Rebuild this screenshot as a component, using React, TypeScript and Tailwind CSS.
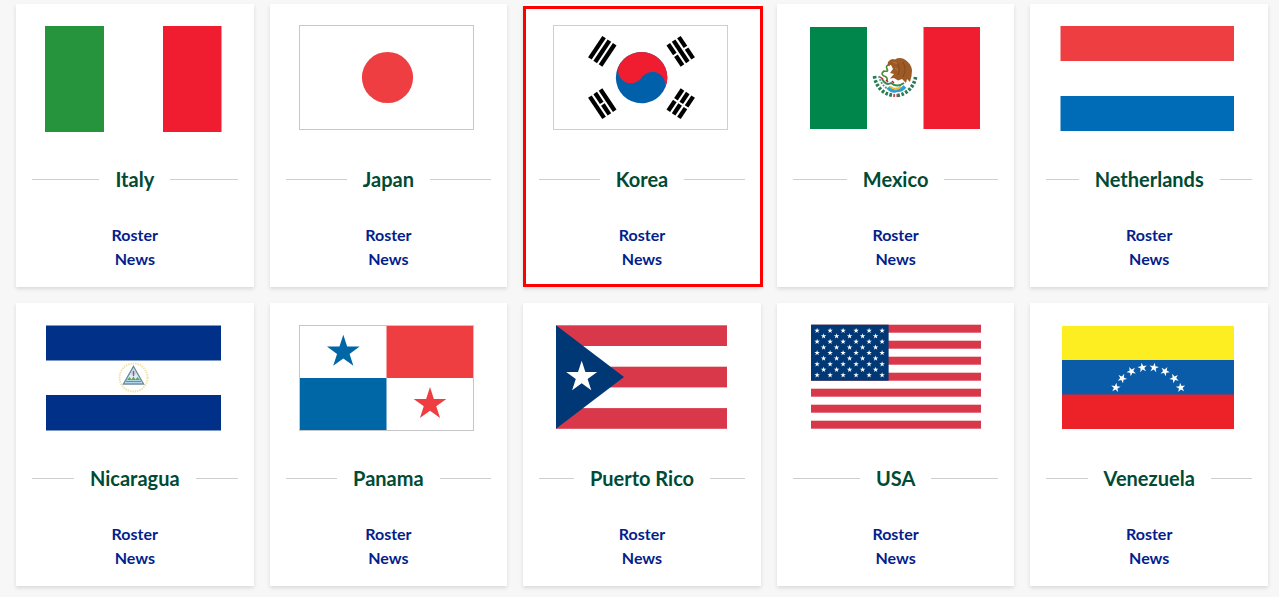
import type { ReactNode } from "react";

const starPoints = (cx: number, cy: number, r: number) =>
  Array.from({ length: 10 }, (_, i) => {
    const radius = i % 2 === 0 ? r : r * 0.382;
    const a = (Math.PI / 5) * i - Math.PI / 2;
    return `${(cx + radius * Math.cos(a)).toFixed(2)},${(cy + radius * Math.sin(a)).toFixed(2)}`;
  }).join(" ");

function Star({ cx, cy, r, fill, turn = 0 }: { cx: number; cy: number; r: number; fill: string; turn?: number }) {
  return <polygon points={starPoints(cx, cy, r)} fill={fill} transform={`rotate(${turn} ${cx} ${cy})`} />;
}

function Trigram({ x, y, turn, broken }: { x: number; y: number; turn: number; broken: boolean[] }) {
  return (
    <g transform={`translate(${x} ${y}) rotate(${turn})`} fill="#000">
      {broken.map((split, i) => {
        const left = (i - 1) * 6.4 - 2.15;
        return split ? (
          <g key={i}>
            <rect x={left} y={-12.8} width={4.3} height={11.8} />
            <rect x={left} y={1} width={4.3} height={11.8} />
          </g>
        ) : (
          <rect key={i} x={left} y={-12.8} width={4.3} height={25.6} />
        );
      })}
    </g>
  );
}

const italy = (
  <>
    <rect x="13" y="6" width="59" height="106" fill="#26933d" />
    <rect x="131" y="6" width="58.5" height="106" fill="#f01d30" />
  </>
);

const japan = (
  <>
    <rect x="14.5" y="5.5" width="174" height="104" fill="#fff" stroke="#c8c8c8" />
    <circle cx="102.5" cy="57.5" r="25.6" fill="#ef3e42" />
  </>
);

const korea = (
  <>
    <rect x="14.5" y="5.5" width="174" height="104" fill="#fff" stroke="#cfcfcf" />
    <g transform="translate(102.6 57.6) rotate(33.7)">
      <circle r="25.7" fill="#0060aa" />
      <path d="M-25.7 0A25.7 25.7 0 0 1 25.7 0A12.85 12.85 0 0 0 0 0A12.85 12.85 0 0 1 -25.7 0Z" fill="#f01d30" />
    </g>
    <Trigram x={63.3} y={31.3} turn={33.7} broken={[false, false, false]} />
    <Trigram x={141.7} y={31.3} turn={-33.7} broken={[true, false, true]} />
    <Trigram x={63.3} y={83.7} turn={-33.7} broken={[false, true, false]} />
    <Trigram x={141.7} y={83.7} turn={33.7} broken={[true, true, true]} />
  </>
);

const mexico = (
  <>
    <rect x="17" y="7" width="57" height="102" fill="#00854a" />
    <rect x="130.5" y="7" width="56.5" height="102" fill="#f01d30" />
    <g fill="none">
      <path d="M81.500 56C82.500 66 90 74.500 101 75.500" stroke="#2a7a55" strokeWidth="3.600" strokeDasharray="2.600 1.600" />
      <path d="M122.500 57C121.500 66 114 74.500 104 75.500" stroke="#2a7a55" strokeWidth="3.600" strokeDasharray="2.600 1.600" />
      <path d="M86 56C87 62 91 67 95 69" stroke="#5f9a7d" strokeWidth="1.800" strokeDasharray="2 1.200" />
      <path d="M95 67.500Q99 72 103 70.500Q108 71 112 66.500" stroke="#2f9fd0" strokeWidth="3.600" />
      <path d="M97 66.500Q103 71.500 108 66.500" stroke="#e8bd3a" strokeWidth="2.200" />
      <path d="M89 59Q93 66 98 63Q104 68 111 63" stroke="#3a8a55" strokeWidth="2" />
      <path d="M97 45Q92 45 94 49Q96 52 91 51Q87 54 91 56Q95 57 94 61" stroke="#4b8a35" strokeWidth="1.600" />
      <path d="M87 57L90 59M93 60L95 62M99 61L101 63" stroke="#b3272d" strokeWidth="1.500" />
    </g>
    <path
      d="M95 42Q98 38 102 39.500Q106 37 111 39Q118 43 119 50Q119 56 117 62L114 59L113 63L109 59L105 60.500L101 58L97 58.500L101 54L97 53L100 49L98 45L94.500 45Z"
      fill="#9c5a26"
    />
    <path d="M104 43Q108 49 105 55M110 42Q114 49 110 57" fill="none" stroke="#7f4519" strokeWidth="0.800" />
    <path d="M100 42L104 43.500M102 48L105 50" stroke="#bd7a41" strokeWidth="0.900" />
    <path d="M100.500 74h4.500v3h-4.500z" fill="#c2464b" />
    <path d="M102.100 74h1.300v3h-1.300z" fill="#fff" />
  </>
);

const netherlands = (
  <>
    <rect x="14.5" y="6" width="173.5" height="35" fill="#ef3e42" />
    <rect x="14.5" y="76" width="173.5" height="35" fill="#006cb7" />
  </>
);

const nicaragua = (
  <>
    <rect x="14" y="6.5" width="175" height="35" fill="#003087" />
    <rect x="14" y="76" width="175" height="35.500" fill="#003087" />
    <circle cx="101.5" cy="58.5" r="14" fill="none" stroke="#efe0a8" strokeWidth="2" strokeDasharray="1.400 1" />
    <path d="M101.500 47.500L111.500 65H91.500Z" fill="#dcecf2" stroke="#6d8a99" strokeWidth="1.400" />
    <path d="M98 55.500L101.500 49.500L105 55.500Z" fill="#b9d9ee" />
    <path d="M101.500 52v5" stroke="#d8453b" strokeWidth="1.400" />
    <path d="M95 61l2.500-3 2 2.500 2-3 2 3 2-2.500 2.500 3Z" fill="#5da659" />
    <path d="M94 62.500h15" stroke="#4c9bc7" strokeWidth="1.600" />
  </>
);

const panama = (
  <>
    <rect x="101.5" y="6.500" width="87" height="52.500" fill="#ef3e42" />
    <rect x="14.500" y="59" width="87" height="52.500" fill="#0067a6" />
    <rect x="14.500" y="6.500" width="174" height="105" fill="none" stroke="#c4c6c7" strokeWidth="1" />
    <Star cx={58.3} cy={32.9} r={17.2} fill="#0067a6" />
    <Star cx={145} cy={85.2} r={17.2} fill="#ef3e42" />
  </>
);

const puertoRico = (
  <>
    {[0, 2, 4].map((i) => (
      <rect key={i} x="17" y={6.3 + i * 20.7} width="171" height="20.7" fill="#d8384a" />
    ))}
    <path d="M17 6.300L85 58L17 109.800Z" fill="#003876" />
    <Star cx={42.7} cy={58} r={16.3} fill="#fff" />
  </>
);

const usa = (
  <>
    {[0, 2, 4, 6, 8, 10, 12].map((i) => (
      <rect key={i} x="18" y={5.7 + i * 8} width="170" height="8" fill="#d8384a" />
    ))}
    <rect x="18" y="5.700" width="77.600" height="56" fill="#003876" />
    {Array.from({ length: 9 }, (_, row) =>
      Array.from({ length: row % 2 === 0 ? 6 : 5 }, (_, col) => (
        <Star
          key={`${row}-${col}`}
          cx={24.1 + col * 13 + (row % 2) * 6.5}
          cy={11.6 + row * 5.58}
          r={2.9}
          fill="#fff"
        />
      )),
    )}
  </>
);

const venezuela = (
  <>
    <rect x="16" y="7" width="172" height="34" fill="#fdee21" />
    <rect x="16" y="41" width="172" height="36" fill="#0a5ba8" />
    <rect x="16" y="75.500" width="172" height="34.500" fill="#ed2228" />
    {[-64.4, -46.4, -27.8, -9.3, 9.3, 27.8, 46.4, 64.4].map((deg) => {
      const a = (deg * Math.PI) / 180;
      return <Star key={deg} cx={102.2 + 36 * Math.sin(a)} cy={84.2 - 36 * Math.cos(a)} r={5} fill="#fff" turn={deg} />;
    })}
  </>
);

type Team = { name: string; flag: ReactNode; selected?: boolean };

const teams: Team[] = [
  { name: "Italy", flag: italy },
  { name: "Japan", flag: japan },
  { name: "Korea", flag: korea, selected: true },
  { name: "Mexico", flag: mexico },
  { name: "Netherlands", flag: netherlands },
  { name: "Nicaragua", flag: nicaragua },
  { name: "Panama", flag: panama },
  { name: "Puerto Rico", flag: puertoRico },
  { name: "USA", flag: usa },
  { name: "Venezuela", flag: venezuela },
];

function TeamCard({ name, flag, selected }: Team) {
  return (
    <article className="relative bg-white p-4 shadow-[0_2px_4px_rgba(0,0,0,0.12)]">
      <div className="flex justify-center">
        <svg viewBox="0 0 206 120" className="h-[120px] w-[206px] shrink-0" aria-hidden="true">
          {flag}
        </svg>
      </div>
      <div className="mt-6 flex items-center gap-4">
        <span className="h-px flex-1 bg-[#cccfce]" />
        <h2 className="text-[20px] leading-[30px] font-bold text-[#004b35]">{name}</h2>
        <span className="h-px flex-1 bg-[#cccfce]" />
      </div>
      <nav aria-label={name} className="mt-[29px] flex flex-col items-center text-base leading-6 font-bold text-[#041e8c]">
        <a href="#roster">Roster</a>
        <a href="#news">News</a>
      </nav>
      {selected && (
        <span className="pointer-events-none absolute top-0.5 -right-0.5 bottom-0 left-0 border-3 border-[#ff0000]" />
      )}
    </article>
  );
}

export default function App() {
  return (
    <main className="min-h-screen bg-[#f7f7f7] pt-1 pr-[11px] pb-[11px] pl-4 font-['Lato',sans-serif]">
      <div className="grid grid-cols-5 gap-4">
        {teams.map((team) => (
          <TeamCard key={team.name} {...team} />
        ))}
      </div>
    </main>
  );
}
